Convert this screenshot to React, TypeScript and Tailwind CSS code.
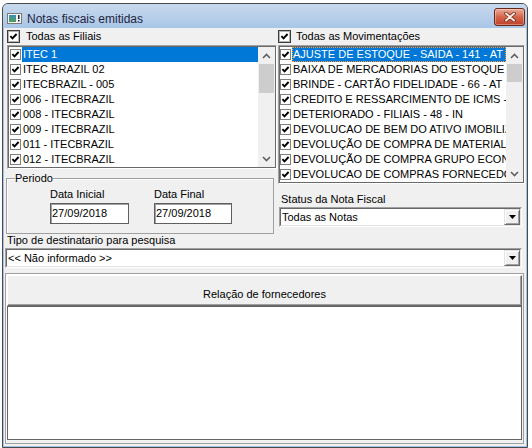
import React from 'react';

const filiais = [
    'ITEC 1',
    'ITEC BRAZIL 02',
    'ITECBRAZIL - 005',
    '006 - ITECBRAZIL',
    '008 - ITECBRAZIL',
    '009 - ITECBRAZIL',
    '011 - ITECBRAZIL',
    '012 - ITECBRAZIL',
];

const movimentacoes = [
    'AJUSTE DE ESTOQUE - SAIDA - 141 - AT',
    'BAIXA DE MERCADORIAS DO ESTOQUE FISICO',
    'BRINDE - CARTÃO FIDELIDADE - 66 - AT',
    'CREDITO E RESSARCIMENTO DE ICMS - ST',
    'DETERIORADO - FILIAIS - 48 - IN',
    'DEVOLUCAO DE BEM DO ATIVO IMOBILIZADO',
    'DEVOLUÇÃO DE COMPRA DE MATERIAL DE USO',
    'DEVOLUÇÃO DE COMPRA GRUPO ECONÔMICO',
    'DEVOLUCAO DE COMPRAS FORNECEDOR',
];

function CheckMark() {
    return (
        <svg width="9" height="9" viewBox="0 0 9 9">
            <polyline points="1.4,4.2 3.5,6.4 7.6,2" fill="none" stroke="#000" strokeWidth="1.9" />
        </svg>
    );
}

function BigCheck() {
    return (
        <span className="flex h-[13px] w-[13px] shrink-0 items-center justify-center border border-[#3c3c3c] bg-white shadow-[inset_0_0_0_1px_#b4b4b4]">
            <CheckMark />
        </span>
    );
}

function SmallCheck() {
    return (
        <span className="flex h-[11px] w-[11px] shrink-0 items-center justify-center border border-[#808080] bg-white">
            <CheckMark />
        </span>
    );
}

function Chevron({ down }: { down?: boolean }) {
    return (
        <svg width="9" height="6" viewBox="0 0 9 6">
            <polyline
                points={down ? '1,1 4.5,4.5 8,1' : '1,5 4.5,1.5 8,5'}
                fill="none"
                stroke="#606060"
                strokeWidth="1.6"
            />
        </svg>
    );
}

function ScrollBar({ thumb }: { thumb: string }) {
    return (
        <div className="flex w-[17px] shrink-0 flex-col bg-[#f0f0f0]">
            <div className="flex h-[17px] shrink-0 items-center justify-center">
                <Chevron />
            </div>
            <div className={`mx-px shrink-0 bg-[#cdcdcd] ${thumb}`} />
            <div className="flex-1" />
            <div className="flex h-[17px] shrink-0 items-center justify-center">
                <Chevron down />
            </div>
        </div>
    );
}

function ListBox({
    items,
    height,
    thumb,
    boxGap,
    focusFirst,
}: {
    items: string[];
    height: string;
    thumb: string;
    boxGap: string;
    focusFirst?: boolean;
}) {
    return (
        <div className={`flex border border-b-white border-l-[#a0a0a0] border-r-white border-t-[#a0a0a0] ${height}`}>
            <div className="flex min-w-0 flex-1 border border-[#696969] bg-white">
                <div className="flex min-w-0 flex-1 flex-col overflow-hidden">
                    {items.map((item, i) => {
                        const selected = i === 0;
                        return (
                            <div key={item} className="flex h-[15px] shrink-0 items-center">
                                <span className={boxGap}>
                                    <SmallCheck />
                                </span>
                                <div
                                    className={`ml-px flex h-full min-w-0 flex-1 items-center overflow-hidden whitespace-nowrap ${
                                        selected ? 'bg-[#0078d7] text-white' : 'pl-px'
                                    } ${selected && focusFirst ? 'border border-dotted border-[#ff9a3c]' : ''} ${
                                        selected && !focusFirst ? 'pl-px' : ''
                                    }`}
                                >
                                    {item}
                                </div>
                            </div>
                        );
                    })}
                </div>
                <ScrollBar thumb={thumb} />
            </div>
        </div>
    );
}

function Combo({ value, width }: { value: string; width: string }) {
    return (
        <div className={`flex h-[20px] border border-b-white border-l-[#a0a0a0] border-r-white border-t-[#a0a0a0] ${width}`}>
            <div className="flex flex-1 items-center border border-b-[#e3e3e3] border-l-[#696969] border-r-[#e3e3e3] border-t-[#696969] bg-white">
                <span className="flex-1 whitespace-nowrap pl-px">{value}</span>
                <span className="flex h-[16px] w-[16px] items-center justify-center border border-b-[#696969] border-l-[#e3e3e3] border-r-[#696969] border-t-[#e3e3e3] bg-[#f0f0f0] shadow-[inset_1px_1px_0_#fff,inset_-1px_-1px_0_#a0a0a0]">
                    <svg width="7" height="4" viewBox="0 0 7 4">
                        <polygon points="0,0 7,0 3.5,4" fill="#000" />
                    </svg>
                </span>
            </div>
        </div>
    );
}

function DateField({ label, value, width }: { label: string; value: string; width: string }) {
    return (
        <div className={`flex flex-col ${width}`}>
            <span className="h-[13px] whitespace-nowrap">{label}</span>
            <div className="mt-[2px] flex h-[21px] items-center border border-[#5f5f5f] bg-white pl-px shadow-[inset_1px_1px_0_#a0a0a0]">
                {value}
            </div>
        </div>
    );
}

function AppIcon() {
    return (
        <svg width="15" height="11" viewBox="0 0 15 11">
            <defs>
                <linearGradient id="ic" x1="0" y1="0" x2="0" y2="1">
                    <stop offset="0" stopColor="#3d8fb8" />
                    <stop offset="1" stopColor="#4f9d5a" />
                </linearGradient>
            </defs>
            <rect x="0.5" y="0.5" width="14" height="10" fill="#f4f4f4" stroke="#7a7a7a" />
            <rect x="2" y="2" width="7" height="7" fill="url(#ic)" />
            <rect x="11" y="2" width="1.5" height="4" fill="#222" />
            <rect x="11" y="7" width="1.5" height="1.5" fill="#222" />
        </svg>
    );
}

function CloseButton() {
    return (
        <div className="flex h-[18px] w-[31px] items-center justify-center rounded-[3px] border border-[#6b2416] bg-linear-to-b from-[#e9ab98] via-[#d3654b] to-[#c0402a] shadow-[inset_0_0_0_1px_rgba(255,255,255,0.35)]">
            <svg width="12" height="10" viewBox="0 0 12 10">
                <path d="M2 1.5 L10 8.5 M10 1.5 L2 8.5" stroke="#7a2c1e" strokeWidth="3.6" strokeLinecap="round" />
                <path d="M2 1.5 L10 8.5 M10 1.5 L2 8.5" stroke="#fbeee9" strokeWidth="1.9" strokeLinecap="round" />
            </svg>
        </div>
    );
}

export default function App() {
    return (
        <div className="h-[448px] w-[532px] bg-white pl-[2px] pt-[3px] font-['Liberation_Sans',Arial,sans-serif] text-[11px] leading-[13px] text-black">
            <div className="flex h-[445px] w-[526px] flex-col overflow-hidden rounded-t-[6px] border border-[#4a4a4a] bg-[#9fc4e8]">
                <div className="flex h-[24px] shrink-0 items-start bg-linear-to-b from-[#c8d9ec] to-[#a9c6e7]">
                    <div className="ml-[4px] mt-[9px] flex">
                        <AppIcon />
                    </div>
                    <span className="ml-[5px] mt-[8px] text-[12px] leading-[14px] text-[#1f1f3f]">Notas fiscais emitidas</span>
                    <div className="ml-auto mr-[2px] mt-[4px]">
                        <CloseButton />
                    </div>
                </div>

                <div className="mx-px flex h-[418px] shrink-0 flex-col bg-[#f0f0f0] pl-px pt-[2px]">
                    <div className="ml-[2px] flex gap-px">
                        <div className="flex w-[270px] flex-col">
                            <div className="flex h-[13px] items-center gap-[6px]">
                                <BigCheck />
                                <span>Todas as Filiais</span>
                            </div>
                            <div className="mt-[2px]">
                                <ListBox items={filiais} height="h-[124px]" thumb="h-[29px]" boxGap="ml-[1px]" />
                            </div>
                            <fieldset className="-ml-px mt-[3px] w-[268px] border border-[#a0a0a0] pb-[9px] shadow-[inset_1px_1px_0_#fff]">
                                <legend className="ml-[8px] h-[13px] px-0">Periodo</legend>
                                <div className="flex gap-[25px] pl-[43px] pt-[3px]">
                                    <DateField label="Data Inicial" value="27/09/2018" width="w-[79px]" />
                                    <DateField label="Data Final" value="27/09/2018" width="w-[78px]" />
                                </div>
                            </fieldset>
                        </div>

                        <div className="flex w-[247px] flex-col">
                            <div className="flex h-[13px] items-center gap-[5px]">
                                <BigCheck />
                                <span>Todas as Movimentações</span>
                            </div>
                            <div className="mt-[2px]">
                                <ListBox items={movimentacoes} height="h-[139px]" thumb="h-[18px]" boxGap="ml-0" focusFirst />
                            </div>
                            <span className="ml-[3px] mt-[9px] h-[13px]">Status da Nota Fiscal</span>
                            <div className="ml-px mt-px">
                                <Combo value="Todas as Notas" width="w-[243px]" />
                            </div>
                        </div>
                    </div>

                    <span className="h-[13px] pl-[2px]">Tipo de destinatario para pesquisa</span>
                    <div className="mt-px">
                        <Combo value="<< Não informado >>" width="w-[517px]" />
                    </div>

                    <div className="mt-[5px] flex h-[171px] w-[519px] flex-col border border-[#a0a0a0] p-px pb-[3px] shadow-[inset_1px_1px_0_#fff]">
                        <div className="flex h-[31px] shrink-0 items-end justify-center border border-b-[#696969] border-l-white border-r-[#696969] border-t-white bg-[#f0f0f0] pb-[4px] shadow-[inset_-1px_-1px_0_#a0a0a0]">
                            Relação de fornecedores
                        </div>
                        <div className="flex-1 border border-[#646464] bg-white" />
                    </div>
                </div>
            </div>
        </div>
    );
}
